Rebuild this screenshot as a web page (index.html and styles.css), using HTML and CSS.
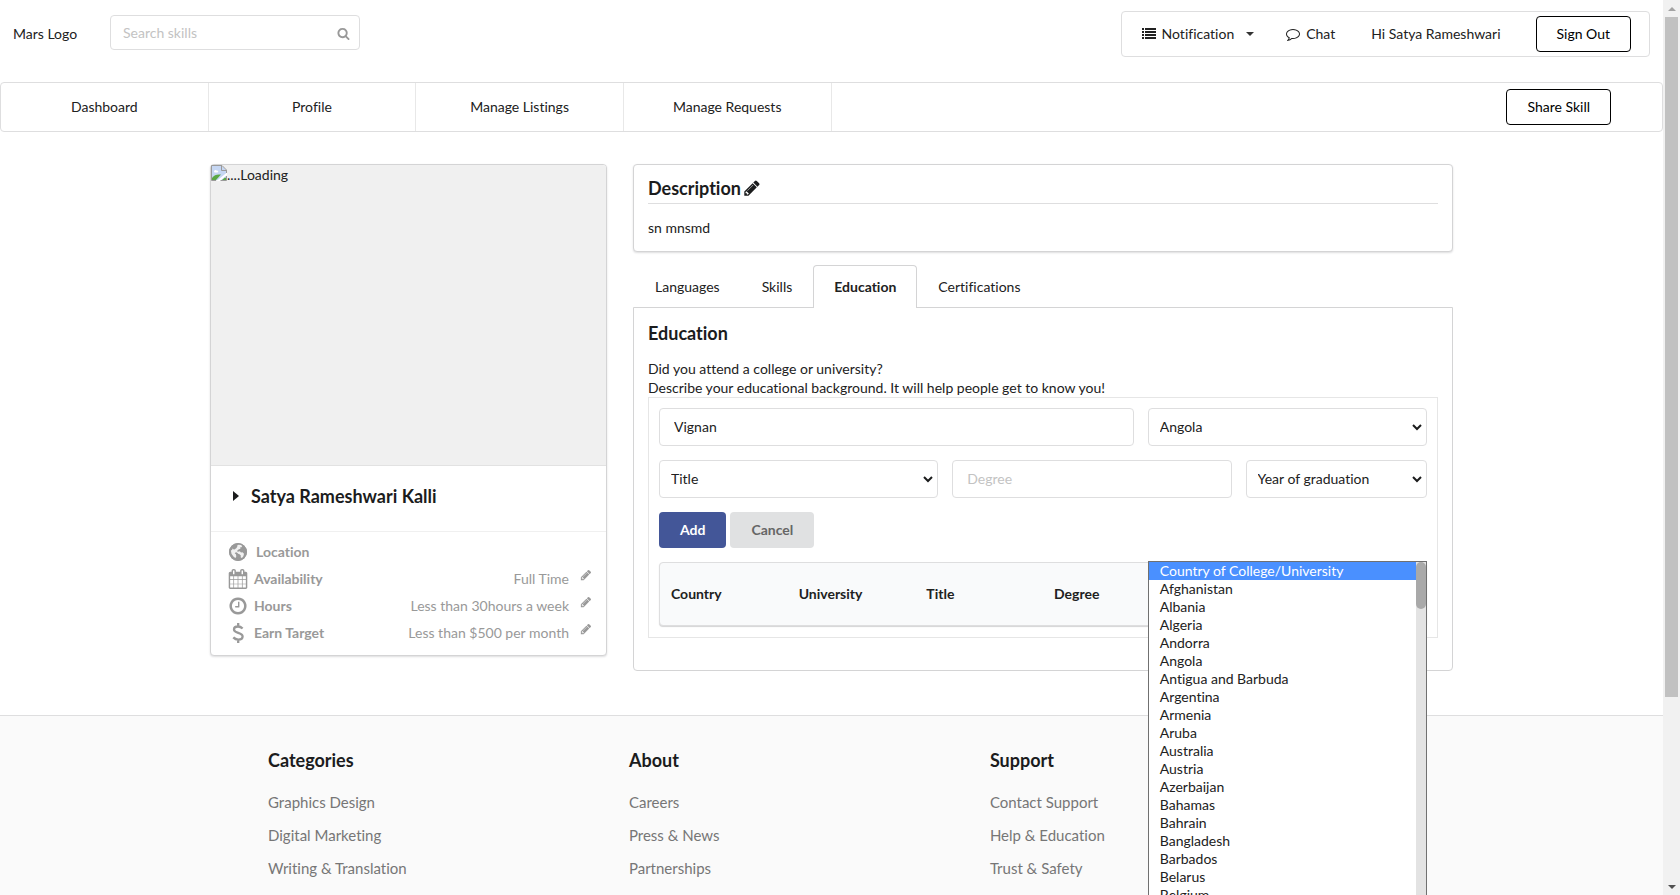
FILE: index.html
```html
<!DOCTYPE html>
<html lang="en">
<head>
<meta charset="utf-8">
<title>Profile</title>
<link rel="stylesheet" href="styles.css">
</head>
<body>
<svg class="sprite" aria-hidden="true">
  <symbol id="i-search" viewBox="0 0 1792 1792"><path d="M1216 832q0-185-131.5-316.5t-316.5-131.5-316.5 131.5-131.5 316.5 131.5 316.5 316.5 131.5 316.5-131.5 131.5-316.5zm512 832q0 52-38 90t-90 38q-54 0-90-38l-343-342q-179 124-399 124-143 0-273.5-55.5t-225-150-150-225-55.5-273.5 55.5-273.5 150-225 225-150 273.5-55.5 273.5 55.5 225 150 150 225 55.5 273.5q0 220-124 399l343 343q37 37 37 90z"/></symbol>
  <symbol id="i-pencil" viewBox="0 0 1792 1792"><path d="M491 1536l91-91-235-235-91 91v107h128v128h107zm523-928q0-22-22-22-10 0-17 7l-542 542q-7 7-7 17 0 22 22 22 10 0 17-7l542-542q7-7 7-17zm-54-192l416 416-832 832h-416v-416zm683 96q0 53-37 90l-166 166-416-416 166-165q36-38 90-38 53 0 91 38l235 234q37 39 37 91z"/></symbol>
  <symbol id="i-comment" viewBox="0 0 1792 1792"><path d="M896 384q-204 0-381.5 69.5t-282 187.5-104.5 255q0 112 71.5 213.5t201.5 175.5l87 50-27 96q-24 91-70 172 152-63 275-171l43-38 57 6q69 8 130 8 204 0 381.5-69.5t282-187.5 104.5-255-104.5-255-282-187.5-381.5-69.5zm896 512q0 174-120 321.5t-326 233-450 85.5q-70 0-145-8-198 175-460 242-49 14-114 22h-5q-15 0-27-10.5t-16-27.5v-1q-3-4-.5-12t2-10 4.5-9.5l6-9 7-8.5 8-9q7-8 31-34.5t34.5-38 31-39.5 32.5-51 27-59 26-76q-157-89-247.5-220t-90.5-281q0-174 120-321.5t326-233 450-85.5 450 85.5 326 233 120 321.5z"/></symbol>
  <symbol id="i-calendar" viewBox="0 0 1792 1792"><path d="M192 1664h288v-288h-288v288zm352 0h320v-288h-320v288zm-352-352h288v-320h-288v320zm352 0h320v-320h-320v320zm-352-384h288v-288h-288v288zm736 736h320v-288h-320v288zm-384-736h320v-288h-320v288zm768 736h288v-288h-288v288zm-384-352h320v-320h-320v320zm-352-864v-288q0-13-9.5-22.5t-22.5-9.5h-64q-13 0-22.5 9.5t-9.5 22.5v288q0 13 9.5 22.5t22.5 9.5h64q13 0 22.5-9.5t9.5-22.5zm736 864h288v-320h-288v320zm-384-384h320v-288h-320v288zm384 0h288v-288h-288v288zm32-480v-288q0-13-9.5-22.5t-22.5-9.5h-64q-13 0-22.5 9.5t-9.5 22.5v288q0 13 9.5 22.5t22.5 9.5h64q13 0 22.5-9.5t9.5-22.5zm384-64v1280q0 52-38 90t-90 38h-1408q-52 0-90-38t-38-90v-1280q0-52 38-90t90-38h128v-96q0-66 47-113t113-47h64q66 0 113 47t47 113v96h384v-96q0-66 47-113t113-47h64q66 0 113 47t47 113v96h128q52 0 90 38t38 90z"/></symbol>
  <symbol id="i-clock" viewBox="0 0 1792 1792"><path d="M1024 544v448q0 14-9 23t-23 9h-320q-14 0-23-9t-9-23v-64q0-14 9-23t23-9h224v-352q0-14 9-23t23-9h64q14 0 23 9t9 23zm416 352q0-148-73-273t-198-198-273-73-273 73-198 198-73 273 73 273 198 198 273 73 273-73 198-198 73-273zm224 0q0 209-103 385.5t-279.5 279.5-385.5 103-385.5-103-279.5-279.5-103-385.5 103-385.5 279.5-279.5 385.5-103 385.5 103 279.5 279.5 103 385.5z"/></symbol>
  <symbol id="i-globe" viewBox="0 0 20 20"><circle cx="10" cy="10" r="9"/><path fill="#fff" d="M9.500 2.300l3.500.700 2 1.500-1.500.300-1 1.200-1.500.500-1.500 1.500-1.500.500.500 1.200-1.500-.400-1 1 .500 1.200 1.300.300.700 1.200 1.800.300 1.500 1.500-1 1.700-1.300 1.300-.300 1.500-1.700-2-.500-2.500-1.500-1.800-1-1.500-1.500-1-.700-1.500z" opacity="0"/><path fill="#fff" d="M11 2.200l3.500 1.200-1 1.800-1.500.300.500 1.300-2 .700-1.500 1.500.800.800 2-.600 1.200 1.200 1.500-.200 1.500 1.600-.600 2.400-1.400 1.800-1.200-.600-.300-2.400-2-.800-1.600-1.700-1-.300-1.200 1 1.400 1.200.400 2-1.200 1.600-1.900-1.600-1.900-2.600-.600-3.200 1-.600 1.200-2.200 1.800-.300 1.300-1.200z" opacity=".85"/><path d="M5.500 3.500l3-1 1 1.500-1 2-2 1.500-2-.500zM8.500 11.500l2.500.500 1.500 1.500-1 2.500-2 1.500-1-2.500zM14 6l3 .500.500 3-2 .500-2-1.500z"/><circle cx="10" cy="10" r="8.300" fill="none" stroke="currentColor" stroke-width="1.400"/></symbol>
  <symbol id="i-dollar" viewBox="0 0 20 20"><path fill="none" stroke="currentColor" stroke-width="2.300" d="M14.600 5.500C13.300 4.200 11.800 3.500 10 3.500c-2.400 0-4 1.200-4 3 0 4.300 8.600 2.400 8.600 7 0 1.900-1.800 3.100-4.300 3.100-2 0-3.700-.800-5-2.200M10.200 0v3.500M10.200 16.500V20"/></symbol>
  <symbol id="i-list" viewBox="0 0 14 12"><path d="M0 0h2v2H0zM3 0h11v2H3zM0 3h2v2H0zM3 3h11v2H3zM0 6h2v2H0zM3 6h11v2H3zM0 9h2v2H0zM3 9h11v2H3z"/></symbol>
</svg>

<div class="page">
  <header class="topbar">
    <a class="logo" href="#">Mars Logo</a>
    <div class="search">
      <input type="text" placeholder="Search skills" aria-label="Search skills">
      <svg class="icon"><use href="#i-search"/></svg>
    </div>
    <div class="usermenu">
      <button class="menuitem" type="button"><svg class="icon list"><use href="#i-list"/></svg>Notification<span class="caret"></span></button>
      <a class="menuitem" href="#"><svg class="icon"><use href="#i-comment"/></svg>Chat</a>
      <span class="greeting">Hi Satya Rameshwari</span>
      <button class="outline" type="button">Sign Out</button>
    </div>
  </header>

  <nav class="mainnav">
    <a href="#">Dashboard</a>
    <a href="#">Profile</a>
    <a href="#">Manage Listings</a>
    <a href="#">Manage Requests</a>
    <div class="share"><button class="outline" type="button">Share Skill</button></div>
  </nav>

  <main class="content">
    <aside class="card profile">
      <div class="photo">
        <svg class="broken" viewBox="0 0 16 16"><path fill="#c6d7f3" d="M1 1h10l4 4v10H1z"/><path fill="#fff" d="M3 6.500C3 5 5 4.500 5.500 5.500 7 5 8 7 6.500 7.500H3.500z"/><path fill="#5aa845" d="M1 15v-2c2-3 5-4 9-3.500L5 15z"/><path fill="#fff" d="M5.500 16 16 7.500V10L9 16z"/><path fill="#5aa845" d="M11 15l3-2.500 1 .500v2z"/><path fill="none" stroke="#9a9a9a" d="M5 15.500H.500V.500H11L15.500 5v3M9.500 15.500h6V11M10.500.500V5.500h5"/></svg><span>....Loading</span>
      </div>
      <div class="name"><span class="arrow"></span><h2>Satya Rameshwari Kalli</h2></div>
      <ul class="facts">
        <li><svg class="icon"><use href="#i-globe"/></svg><strong class="place">Location</strong></li>
        <li><svg class="icon"><use href="#i-calendar"/></svg><strong>Availability</strong><span>Full Time</span><button type="button" aria-label="Edit availability"><svg class="icon"><use href="#i-pencil"/></svg></button></li>
        <li><svg class="icon"><use href="#i-clock"/></svg><strong>Hours</strong><span>Less than 30hours a week</span><button type="button" aria-label="Edit hours"><svg class="icon"><use href="#i-pencil"/></svg></button></li>
        <li><svg class="icon"><use href="#i-dollar"/></svg><strong>Earn Target</strong><span>Less than $500 per month</span><button type="button" aria-label="Edit earn target"><svg class="icon"><use href="#i-pencil"/></svg></button></li>
      </ul>
    </aside>

    <div class="details">
      <section class="card description">
        <h3>Description<svg class="icon"><use href="#i-pencil"/></svg></h3>
        <p>sn mnsmd</p>
      </section>

      <div class="tabs" role="tablist">
        <button type="button" role="tab">Languages</button>
        <button type="button" role="tab">Skills</button>
        <button type="button" role="tab" class="active" aria-selected="true">Education</button>
        <button type="button" role="tab">Certifications</button>
      </div>

      <section class="panel">
        <h3>Education</h3>
        <p>Did you attend a college or university?<br>Describe your educational background. It will help people get to know you!</p>
        <form class="editor">
          <div class="fields">
            <input class="w10" type="text" value="Vignan" aria-label="University">
            <div class="pick w6">
              <select aria-label="Country"><option>Angola</option></select>
              <svg class="chevron" viewBox="0 0 10 7"><path d="M1 1l4 4 4-4"/></svg>
              <div class="dropdown" role="listbox" aria-label="Countries">
                <ul>
                  <li class="on" role="option">Country of College/University</li>
                  <li role="option">Afghanistan</li>
                  <li role="option">Albania</li>
                  <li role="option">Algeria</li>
                  <li role="option">Andorra</li>
                  <li role="option">Angola</li>
                  <li role="option">Antigua and Barbuda</li>
                  <li role="option">Argentina</li>
                  <li role="option">Armenia</li>
                  <li role="option">Aruba</li>
                  <li role="option">Australia</li>
                  <li role="option">Austria</li>
                  <li role="option">Azerbaijan</li>
                  <li role="option">Bahamas</li>
                  <li role="option">Bahrain</li>
                  <li role="option">Bangladesh</li>
                  <li role="option">Barbados</li>
                  <li role="option">Belarus</li>
                  <li role="option">Belgium</li>
                </ul>
                <div class="track"><div class="thumb"></div></div>
              </div>
            </div>
            <div class="pick w6">
              <select aria-label="Title"><option>Title</option></select>
              <svg class="chevron" viewBox="0 0 10 7"><path d="M1 1l4 4 4-4"/></svg>
            </div>
            <input class="w6" type="text" placeholder="Degree" aria-label="Degree">
            <div class="pick w4">
              <select aria-label="Year of graduation"><option>Year of graduation</option></select>
              <svg class="chevron" viewBox="0 0 10 7"><path d="M1 1l4 4 4-4"/></svg>
            </div>
          </div>
          <div class="actions">
            <button type="button" class="add">Add</button>
            <button type="button" class="cancel">Cancel</button>
          </div>
          <table>
            <thead><tr><th>Country</th><th>University</th><th>Title</th><th>Degree</th><th></th><th></th></tr></thead>
          </table>
        </form>
      </section>
    </div>
  </main>

  <footer class="footer">
    <div class="columns">
      <section><h3>Categories</h3><a href="#">Graphics Design</a><a href="#">Digital Marketing</a><a href="#">Writing &amp; Translation</a></section>
      <section><h3>About</h3><a href="#">Careers</a><a href="#">Press &amp; News</a><a href="#">Partnerships</a></section>
      <section><h3>Support</h3><a href="#">Contact Support</a><a href="#">Help &amp; Education</a><a href="#">Trust &amp; Safety</a></section>
    </div>
  </footer>
</div>
<div class="scrollbar" aria-hidden="true"><span class="up"></span><div class="rail"><div class="grip"></div></div><span class="down"></span></div>
</body>
</html>
```
FILE: styles.css
```css
* { box-sizing: border-box; }
body {
  margin: 0;
  height: 100vh;
  overflow: hidden;
  display: grid;
  grid-template-columns: 1fr 17px;
  grid-template-rows: 100vh;
  font: 14px/20px Lato, sans-serif;
  font-variant-ligatures: none;
  color: #212121;
  background: #fff;
}
a { color: inherit; text-decoration: none; }
button, input, select { font: inherit; font-variant-ligatures: none; color: inherit; margin: 0; }
button { background: none; border: 0; padding: 0; cursor: pointer; }
h2, h3, p, ul { margin: 0; padding: 0; }
h2, h3 { font-size: 18px; line-height: 24px; font-weight: 700; color: #1b1c1d; }
ul { list-style: none; }
.sprite { display: none; }
.icon { width: 14px; height: 14px; fill: currentColor; flex: none; }
.page { overflow: hidden; display: flex; flex-direction: column; }

.topbar { display: flex; align-items: flex-start; height: 82px; flex: none; padding: 11px 13px 0; }
.logo { padding-top: 13px; width: 97px; }
.search { width: 250px; margin-top: 4px; display: flex; align-items: center; height: 35px; border: 1px solid #dededf; border-radius: 4px; padding: 0 9px 0 12px; color: #999; }
.search input { flex: 1; min-width: 0; border: 0; outline: 0; background: none; padding: 0; }
.search .icon { width: 13px; height: 13px; margin-top: 2px; }
::placeholder { color: #c3c3c3; opacity: 1; }
.usermenu { margin-left: auto; display: flex; align-items: center; height: 46px; border: 1px solid #dededf; border-radius: 4px; padding: 0 18px 0 20px; }
.menuitem { display: flex; align-items: center; gap: 6px; margin-right: 32px; }
.caret { margin-left: 6px; border: 4px solid transparent; border-top-color: #333; border-bottom: 0; }
.list { height: 12px; }
.greeting { margin: 0 35px 0 4px; }
.outline { height: 36px; padding: 0 20px; border: 1px solid #000; border-radius: 4px; color: #000; }

.mainnav { display: flex; height: 50px; flex: none; border: 1px solid #dededf; border-radius: 4px; }
.mainnav a { width: 12.5%; display: flex; align-items: center; justify-content: center; border-right: 1px solid #e8e8e8; }
.share { margin: auto 51px auto auto; }

.content { width: 100%; max-width: 1243px; margin: 32px auto 44px; display: grid; grid-template-columns: 397fr 820fr; gap: 26px; align-items: start; flex: none; }
.card { border: 1px solid #d4d4d5; border-radius: 4px; box-shadow: 0 1px 2px rgba(34, 36, 38, .15); background: #fff; }
.photo { height: 301px; background: #f0f0f0; border-bottom: 1px solid #e2e2e2; display: flex; align-items: flex-start; border-radius: 3px 3px 0 0; }
.broken { width: 16px; height: 16px; flex: none; }
.name { display: flex; align-items: center; gap: 12px; height: 66px; padding: 0 22px 6px; border-bottom: 1px solid #f0f0f0; }
.arrow { border: 5px solid transparent; border-left: 6px solid #1b1c1d; border-right: 0; }
.facts { padding: 6px 14px 9px 17px; color: #999; }
.facts li { display: flex; align-items: center; height: 27px; }
.facts .icon { width: 20px; height: 20px; }
.facts strong { margin: 0 auto 0 6px; }
.facts .place { margin-left: 8px; }
.facts button { margin-left: 11px; padding-bottom: 6px; height: 20px; display: flex; }
.facts button .icon { width: 12px; height: 12px; }

.description { padding: 11px 14px 13px; }
.description h3 { display: flex; align-items: center; gap: 2px; padding-bottom: 3px; border-bottom: 1px solid #dededf; }
.description .icon { width: 18px; height: 18px; }
.description p { padding-top: 14px; }
.tabs { display: flex; margin-top: 13px; padding-left: 1px; }
.tabs button { height: 43px; padding: 0 20px; border: 1px solid transparent; }
.tabs .active { font-weight: 700; border-color: #d4d4d5; border-bottom: 0; border-radius: 4px 4px 0 0; background: #fff; position: relative; }
.panel { margin-top: -1px; border: 1px solid #d4d4d5; border-radius: 0 0 4px 4px; padding: 13px 14px 32px; }
.panel p { padding-top: 14px; line-height: 19px; }
.editor { border: 1px solid #e6e6e6; padding: 10px 10px 11px; }
.fields { display: grid; grid-template-columns: repeat(16, 1fr); gap: 14px; }
.w10 { grid-column: span 10; }
.w6 { grid-column: span 6; }
.w4 { grid-column: span 4; }
.fields input, .fields select { width: 100%; min-width: 0; height: 38px; border: 1px solid #dededf; border-radius: 4px; background: #fff; padding: 0 14px 1px; }
.fields select { appearance: none; padding: 0 11px; }
.pick { position: relative; height: 38px; }
.chevron { position: absolute; right: 5px; top: 16px; width: 10px; height: 7px; fill: none; stroke: #1b1c1d; stroke-width: 2; }
.dropdown { position: absolute; z-index: 5; left: 0; right: 0; top: 153px; height: 362px; display: flex; border: 1px solid #707070; background: #fff; line-height: 18px; }
.dropdown ul { flex: 1; }
.dropdown li { padding-left: 11px; }
.dropdown .on { background: #4a90ff; color: #fff; }
.track { width: 10px; background: #e3e3e3; }
.thumb { height: 47px; background: #a9a9a9; border-radius: 5px; }
.actions { display: flex; gap: 4px; margin: 14px 0; }
.actions button { height: 36px; padding: 0 21px; border-radius: 4px; font-weight: 700; }
.actions .add { background: #435698; color: #fff; }
.actions .cancel { background: #e0e1e2; color: #666; }
table { width: 100%; table-layout: fixed; border: 1px solid #dededf; border-radius: 4px; border-spacing: 0; background: #f9fafb; box-shadow: 0 1px 1px #d4d4d5; }
th { height: 62px; padding: 0 11px; text-align: left; }

.footer { flex: 1 0 auto; background: #fafafa; border-top: 1px solid #dededf; padding-top: 32px; }
.columns { max-width: 1155px; margin: auto; display: grid; grid-template-columns: 5fr 5fr 5fr 1fr; }
.columns section { padding: 0 14px; }
.columns h3 { margin-bottom: 14px; }
.columns a { display: block; font-size: 15px; line-height: 33px; color: #767676; }

.scrollbar { background: #f1f1f1; display: flex; flex-direction: column; align-items: center; }
.up, .down { width: 17px; height: 17px; display: grid; place-items: center; }
.up::before, .down::before { content: ""; border: 4px solid transparent; }
.up::before { border-bottom-color: #a3a3a3; border-top: 0; }
.down::before { border-top-color: #505050; border-bottom: 0; }
.rail { flex: 1; width: 13px; }
.grip { height: 79%; background: #c1c1c1; }
```
